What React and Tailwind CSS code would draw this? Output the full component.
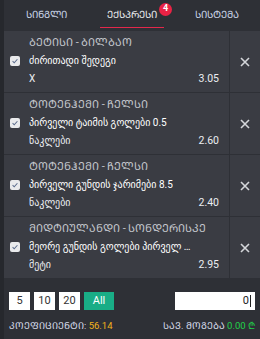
import { useState } from "react";

const bets = [
  { match: "ᲑᲔᲢᲘᲡᲘ - ᲑᲘᲚᲑᲐᲝ", market: "ძირითადი შედეგი", pick: "X", odd: "3.05" },
  { match: "ᲢᲝᲢᲔᲜᲰᲔᲛᲘ - ᲩᲔᲚᲡᲘ", market: "პირველი ტაიმის გოლები 0.5", pick: "ნაკლები", odd: "2.60" },
  { match: "ᲢᲝᲢᲔᲜᲰᲔᲛᲘ - ᲩᲔᲚᲡᲘ", market: "პირველი გუნდის ჯარიმები 8.5", pick: "ნაკლები", odd: "2.40" },
  { match: "ᲛᲘᲓᲢᲘᲣᲚᲐᲜᲓᲘ - ᲡᲝᲜᲓᲔᲠᲘᲡᲙᲔ", market: "მეორე გუნდის გოლები პირველ ტაიმში", pick: "მეტი", odd: "2.95" },
];

function Check() {
  return (
    <span className="flex h-[10px] w-[10px] shrink-0 items-center justify-center rounded-[2px] bg-[#e9eaec]">
      <svg viewBox="0 0 10 10" className="h-[8px] w-[8px]" fill="none" stroke="#5a6b8c" strokeWidth="1.3">
        <path d="M2 5.2l2 2 4-4.4" />
      </svg>
    </span>
  );
}

export default function App() {
  const [tab] = useState(1);
  const tabs = ["ᲡᲘᲜᲒᲚᲘ", "ᲔᲥᲡᲞᲠᲔᲡᲘ", "ᲡᲘᲡᲢᲔᲛᲐ"];

  return (
    <div className="flex h-[339px] w-[260px] bg-[#26282d] font-['Roboto','DejaVu_Sans',sans-serif] text-[10px]">
      <div className="ml-[4px] flex flex-1 flex-col bg-[#2e3036]">
        {/* Tabs */}
        <div className="flex h-[31px]">
          {tabs.map((t, i) => (
            <div key={t} className="flex flex-1 items-center justify-center">
              <div className="relative">
                <span className={`block pt-[3px] pb-[5px] text-[10px] ${i === tab ? "border-b border-[#e3284b] px-[7px] text-[#e8e9ec]" : "text-[#c9d3e6]"}`}>
                  {t}
                </span>
                {i === tab && (
                  <span className="absolute -right-[8px] -top-[1px] flex h-[13px] w-[13px] items-center justify-center rounded-full bg-[#ea2345] text-[9px] font-bold text-white">
                    4
                  </span>
                )}
              </div>
            </div>
          ))}
        </div>

        {/* Bets */}
        <div className="flex flex-col gap-px">
          {bets.map((b, i) => (
            <div key={i} className="flex h-[61px] bg-[#3a3c43]">
              <div className="flex flex-1 flex-col justify-center gap-[3px] pr-[10px]">
                <div className="pl-[25px] text-[11px] leading-[14px] text-[#c3c6cc]">{b.match}</div>
                <div className="flex items-center gap-[9px] pl-[6px]">
                  <Check />
                  <span className="max-w-[164px] truncate text-white">{b.market}</span>
                </div>
                <div className="flex justify-between pl-[25px] text-[#eceef2]">
                  <span>{b.pick}</span>
                  <span className="text-[10.5px]">{b.odd}</span>
                </div>
              </div>
              <div className="flex w-[31px] items-center justify-center border-l border-[#2e3036]">
                <svg viewBox="0 0 10 10" className="h-[10px] w-[10px]" stroke="#d4d6da" strokeWidth="1.6">
                  <path d="M1 1l8 8M9 1l-8 8" />
                </svg>
              </div>
            </div>
          ))}
        </div>

        {/* Stake */}
        <div className="mt-[14px] flex items-center justify-between px-[5px]">
          <div className="flex gap-[4px] text-[11px]">
            {["5", "10", "20"].map((v) => (
              <span key={v} className="flex h-[18px] w-[21px] items-center justify-center bg-white text-[#333]">{v}</span>
            ))}
            <span className="flex h-[18px] w-[30px] items-center justify-center bg-[#19ad86] text-white">All</span>
          </div>
          <div className="flex h-[18px] w-[80px] items-center justify-end bg-white pr-[4px] text-[11px] text-[#222]">
            0<span className="ml-px h-[12px] w-px bg-[#222]" />
          </div>
        </div>

        <div className="mt-[9px] flex items-center justify-between px-[5px] text-[9.5px]">
          <span className="text-[#d6dcea]">
            ᲙᲝᲔᲤᲘᲪᲘᲔᲜᲢᲘ: <span className="text-[#f2b31b]">56.14</span>
          </span>
          <span className="text-[#d6dcea]">
            ᲡᲐᲕ. ᲛᲝᲒᲔᲑᲐ <span className="text-[#21d24a]">0.00 ₾</span>
          </span>
        </div>
      </div>
    </div>
  );
}
